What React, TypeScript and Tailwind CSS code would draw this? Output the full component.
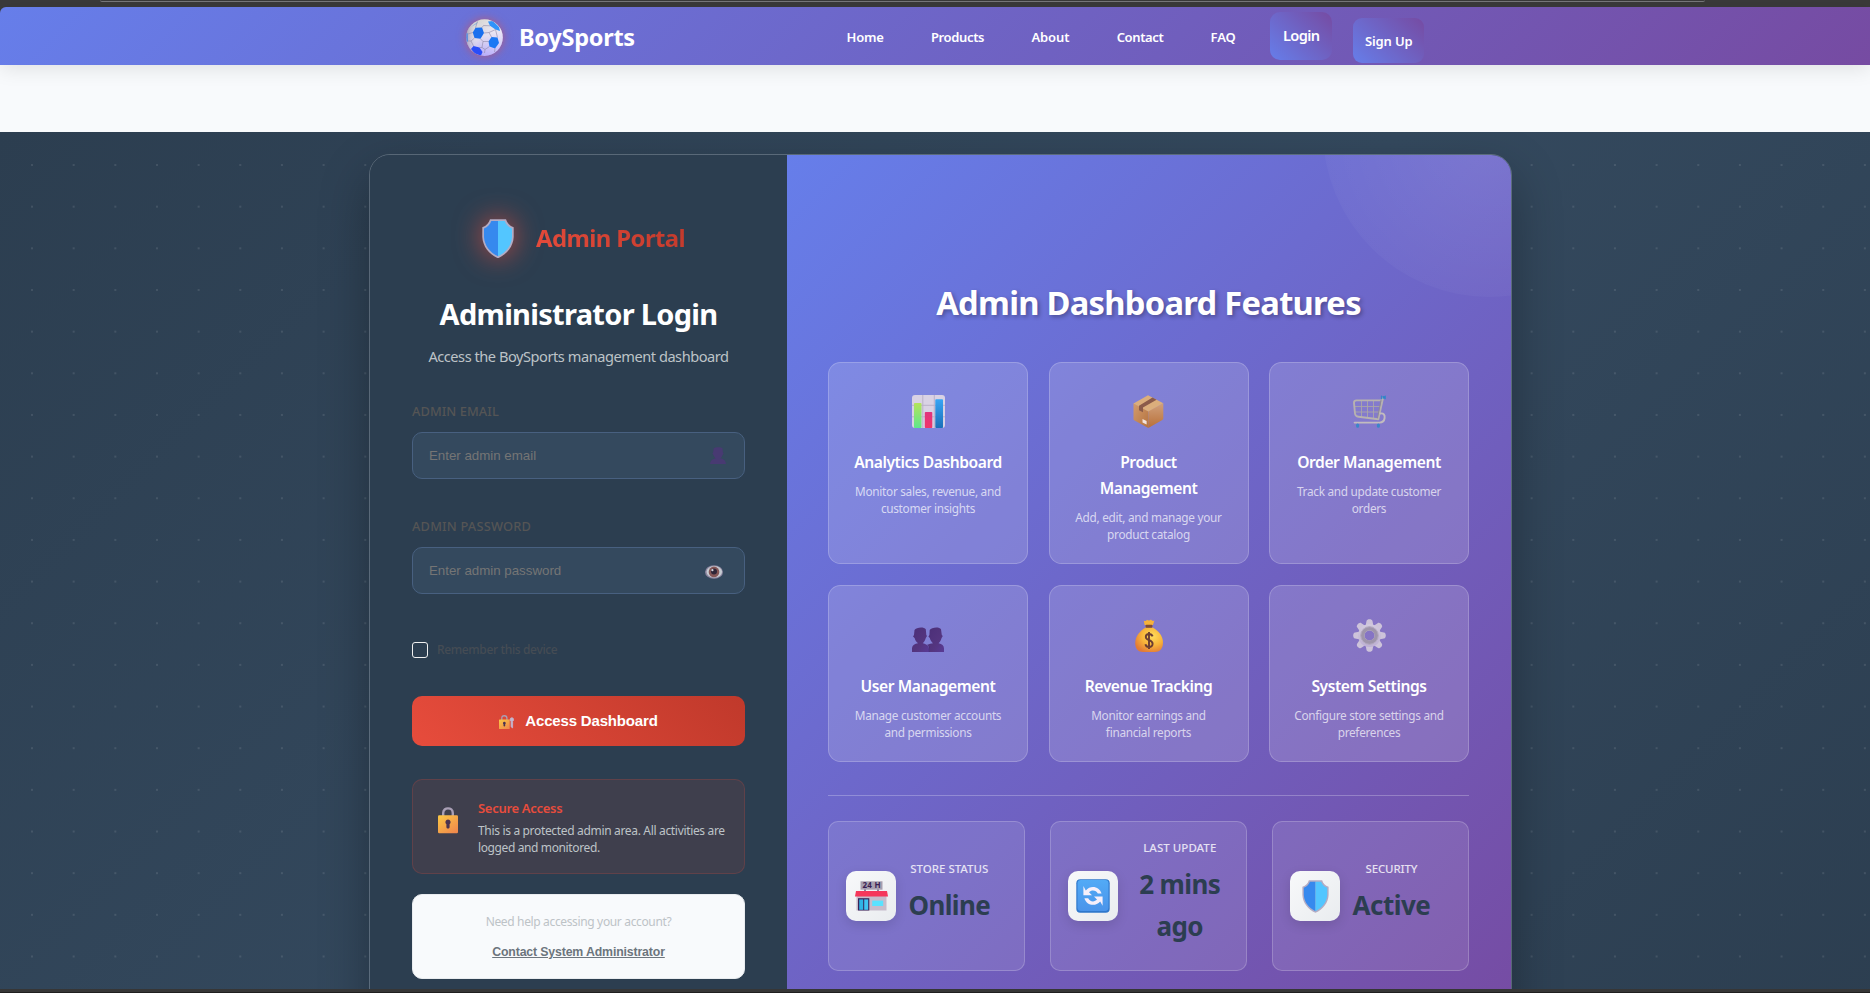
import type { ReactNode } from "react";

function Ball() {
  return (
    <svg viewBox="0 0 37 37" className="size-[37px] shrink-0 drop-shadow-[0_0_5px_rgba(231,76,60,0.6)]">
      <defs>
        <linearGradient id="ballBase" x1="0.2" y1="0" x2="0.6" y2="1">
          <stop offset="0" stopColor="#d6d7ce" />
          <stop offset="0.5" stopColor="#dfdaee" />
          <stop offset="1" stopColor="#ab9ffa" />
        </linearGradient>
        <linearGradient id="ballShade" x1="0" y1="0.5" x2="1" y2="0.5">
          <stop offset="0" stopColor="#6f6a92" stopOpacity="0.5" />
          <stop offset="0.35" stopColor="#ffffff" stopOpacity="0" />
          <stop offset="1" stopColor="#ffffff" stopOpacity="0.45" />
        </linearGradient>
        <clipPath id="ballClip"><circle cx="18.5" cy="18.6" r="18.3" /></clipPath>
      </defs>
      <g clipPath="url(#ballClip)">
        <rect width="37" height="37" fill="url(#ballBase)" />
        <rect width="37" height="37" fill="url(#ballShade)" />
        <path d="M9.5 8.8L16 8.6L18 14L14.5 19.8L8.5 19L6.8 13.5Z" fill="#1a70ee" />
        <path d="M25.5 18L31.5 18.5L33 24L29 29.5L23.5 27.5L22.5 22.5Z" fill="#1a78f4" />
        <path d="M22 2.5L27 2L33 8L34 12L29.5 10.5L24 6.8Z" fill="#2f93fb" />
        <path d="M7.5 27L13.5 28.5L16.5 33L15 36.5L9 35L5 30Z" fill="#2a4df8" />
        <path d="M0 13L1.6 14.5L1.8 22L0.5 24Z" fill="#3a80e8" />
        <path d="M5 8L9.5 4.5L12 2.5L10.5 5Z" fill="#5c9de0" opacity="0.7" />
        <path
          d="M16 8.6L17.5 6.5L24 6.8M9.5 8.8L11.5 2.5M18 14L23 13.5M29.5 10.5L23 13.5L25.5 18M14.5 19.8L17 22.5L22.5 22.5M17 22.5L16 28.5L13.5 28.5M16 28.5L19 30.5L23.5 27.5M8.5 19L5 22L7.5 27M6.8 13.5L2 15M29 29.5L28.5 33M29.5 10.5L31.5 18.5M2 22L5 22M19 30.5L18.5 34"
          fill="none" stroke="#8e8aaa" strokeWidth="0.6"
        />
      </g>
    </svg>
  );
}

function Shield({ className }: { className: string }) {
  return (
    <svg viewBox="0 0 32 39.5" className={className}>
      <path d="M8 0.3H24C25 4 27.6 6.9 31.7 8.2V18C31.2 27.5 25 35.3 16 39.3C7 35.3 0.8 27.5 0.3 18V8.2C4.4 6.9 7 4 8 0.3Z" fill="#b3acc4" />
      <path d="M16 2H9.3C8 5.4 5.6 8 2 9.4V18C2.5 26.6 8 33.5 16 37.3Z" fill="#3689ee" />
      <path d="M16 2H22.7C24 5.4 26.4 8 30 9.4V18C29.5 26.6 24 33.5 16 37.3Z" fill="#53c6ff" />
    </svg>
  );
}

function Chart() {
  return (
    <svg viewBox="0 0 33 33" className="size-[33px]">
      <defs>
        <linearGradient id="barG" x1="0" y1="0" x2="0" y2="1"><stop stopColor="#b4e35a" /><stop offset="1" stopColor="#5ee78d" /></linearGradient>
        <linearGradient id="barR" x1="0" y1="0" x2="0" y2="1"><stop stopColor="#e0347e" /><stop offset="1" stopColor="#f0356a" /></linearGradient>
        <linearGradient id="barB" x1="0" y1="0" x2="0" y2="1"><stop stopColor="#38a5f5" /><stop offset="1" stopColor="#1b6fb8" /></linearGradient>
      </defs>
      <rect width="33" height="33" rx="3" fill="#d9d2e4" />
      <path d="M0 10.3H33M0 21.8H33M10.8 0V33M22.3 0V33" stroke="#b9b1c8" strokeWidth="1" />
      <rect x="2" y="8" width="7.5" height="25" rx="0.8" fill="url(#barG)" />
      <rect x="12.8" y="17" width="7.5" height="16" rx="0.8" fill="url(#barR)" />
      <rect x="23.3" y="4.2" width="7.7" height="28.8" rx="0.8" fill="url(#barB)" />
    </svg>
  );
}

function Package() {
  return (
    <svg viewBox="0 0 33 33" className="size-[33px]">
      <defs>
        <linearGradient id="boxL" x1="0" y1="0" x2="1" y2="1"><stop stopColor="#d39b6c" /><stop offset="1" stopColor="#b5733f" /></linearGradient>
        <linearGradient id="boxR" x1="0" y1="0" x2="0" y2="1"><stop stopColor="#d0a07c" /><stop offset="1" stopColor="#b97038" /></linearGradient>
      </defs>
      <path d="M1.5 8.2L16.3 16V33L2.6 25.6C1.9 25.2 1.5 24.8 1.5 24Z" fill="url(#boxL)" />
      <path d="M31.3 8.2L16.3 16V33L30.3 25C31 24.6 31.3 24.2 31.3 23.5Z" fill="url(#boxR)" />
      <path d="M16 0.2L31.3 8.2L16.3 16.4L1.5 8.4Z" fill="#dbae7c" />
      <path d="M20.5 2.6L24.6 4.8L11 12.6V17.3L7 15.2V10.8Z" fill="#8b5b4a" />
      <path d="M10.5 24L14.6 26V29.6L10.5 27.5Z" fill="#f3e3dc" />
    </svg>
  );
}

function Cart() {
  return (
    <svg viewBox="0 0 33 33" className="size-[33px]" fill="none" strokeLinecap="round" strokeLinejoin="round">
      <path d="M8.5 6V22M14.5 6V22.5M20.5 6V23M1.5 11.5H27.5M2 17H26" stroke="#a9a6a8" strokeWidth="0.9" />
      <path d="M30 3L25.3 24.2L5.5 21.8C3.4 21.5 2.2 20.4 2 18.5L1 8C0.9 6.2 1.8 5.4 3.5 5.4H28.6" stroke="#b7b2b0" strokeWidth="1.9" />
      <path d="M28 5.4L24.5 23" stroke="#8f8b96" strokeWidth="1" />
      <path d="M27.5 18.5C30.6 18 32 20 31.6 23C31.2 26 29.5 27.6 26.5 27.6H1.6" stroke="#c2bcbe" strokeWidth="1.9" />
      <path d="M29.5 2.4H32" stroke="#2f86c8" strokeWidth="2.6" strokeLinecap="butt" />
      <path d="M28.4 1V3.8M32.3 1V3.8" stroke="#2f86c8" strokeWidth="1" />
      <path d="M4.6 30V31.2M25.4 30V31.2" stroke="#3a86c8" strokeWidth="3" />
    </svg>
  );
}

function People() {
  return (
    <svg viewBox="0 0 32 25" className="h-[25px] w-8">
      <defs><linearGradient id="ppl" x1="0" y1="0" x2="1" y2="1"><stop stopColor="#4b2f78" /><stop offset="0.6" stopColor="#54357f" /><stop offset="1" stopColor="#593a96" /></linearGradient></defs>
      <path d="M2.5 3C4 0.2 12 -0.6 13.8 2.2L14.3 8L15 9L13.8 11C13 14 11.5 15.5 10.8 16.2C14 16.7 17 18.5 17 22V25H0V21C0.4 18 2.8 16.8 6 16.3C4.6 15.2 3.2 13.4 2.6 11L1 9.5L2 8Z" fill="url(#ppl)" />
      <path d="M17.7 3C19.2 0.2 27.4 -0.6 29 2.2L29.8 8L30.8 9L29.6 11C28.8 14 27.4 15.4 26.6 16.2C30 16.8 32 18.4 32 21.5V25H17.2C17.4 20.5 17 18.6 15.6 17.8C17 16.8 19.4 16.6 21 16.2C19.6 15.2 18.4 13.4 17.8 11L16.4 9.4L17.4 8Z" fill="url(#ppl)" />
      <path d="M17.3 25C17.4 20.5 17 18.8 15.6 17.8" stroke="#3b2265" strokeWidth="0.6" fill="none" />
    </svg>
  );
}

function MoneyBag() {
  return (
    <svg viewBox="0 0 28 33" className="h-[33px] w-7">
      <defs><radialGradient id="bag" cx="0.62" cy="0.35" r="0.7"><stop stopColor="#ffdd5c" /><stop offset="0.55" stopColor="#f8b43a" /><stop offset="1" stopColor="#e27a36" /></radialGradient></defs>
      <path d="M9.6 6L8.8 1.8C10.4 2.4 11.2 1.8 12 0.8C13.2 1.8 14.6 1.8 16 0.6C16.8 1.8 18 2.4 19.4 1.6L18 6Z" fill="#f6b23c" />
      <path d="M10.5 8.5H17.8C23 11.5 28 16.5 28 23.5C28 30 24.5 33 20 33H8C3.4 33 0.2 30 0.2 24C0.2 17 5.4 11.5 10.5 8.5Z" fill="url(#bag)" />
      <rect x="10.6" y="5.8" width="6.8" height="3" rx="0.8" fill="#7f4a34" />
      <path d="M17.6 17.4C17 15.6 15.6 15 14 15C12 15 10.8 16.2 10.8 18C10.8 22 17.6 20.4 17.6 24.8C17.6 26.8 16 28 14 28C12 28 10.8 27 10.4 25.2M14 13V30" fill="none" stroke="#6b3d33" strokeWidth="1.9" />
    </svg>
  );
}

function Gear() {
  return (
    <svg viewBox="-16.5 -16.5 33 33" className="size-[33px]">
      <defs><linearGradient id="gear" x1="0" y1="0" x2="0" y2="1"><stop stopColor="#d2cade" /><stop offset="1" stopColor="#beb0d4" /></linearGradient></defs>
      <g fill="url(#gear)">
        {[0, 45, 90, 135, 180, 225, 270, 315].map((a) => (
          <path key={a} transform={`rotate(${a})`} d="M-4 -9L-3 -14.5C-2.6 -16.9 2.6 -16.9 3 -14.5L4 -9Z" fill="#cdc3da" />
        ))}
        <path fillRule="evenodd" d="M0 -11.5A11.5 11.5 0 1 1 -0.01 -11.5ZM0 -5A5 5 0 1 0 0.01 -5Z" />
      </g>
      <circle r="7" fill="none" stroke="#9f95ab" strokeWidth="3.8" />
      <circle r="8.8" fill="none" stroke="#b5abc2" strokeWidth="1" />
    </svg>
  );
}

function Store() {
  return (
    <svg viewBox="0 0 33 30" className="h-[30px] w-[33px] overflow-visible">
      <rect x="1.5" y="14" width="30" height="15.5" fill="#c6bccb" />
      <path d="M10 8V12M23 8V12" stroke="#4a3560" strokeWidth="1.2" />
      <rect x="5.5" y="0.3" width="22" height="8.4" fill="#a79fb0" />
      <text x="16.5" y="7.2" textAnchor="middle" fontSize="8" fontWeight="700" fill="#3a1f55" className="font-['Noto_Sans',sans-serif]" textLength="18">24 H</text>
      <path d="M1 10H32L33 15.5H0Z" fill="#f5375b" />
      <rect x="3" y="17.2" width="11.3" height="12.3" fill="#3a2358" />
      <rect x="4.2" y="18.4" width="4" height="10.4" fill="#2fb4e6" />
      <rect x="9.2" y="18.4" width="4" height="10.4" fill="#3fc4f2" />
      <rect x="17.2" y="19.6" width="11" height="5.4" fill="#59e2ff" />
    </svg>
  );
}

function Refresh() {
  return (
    <svg viewBox="0 0 34 34" className="size-[34px]">
      <defs><linearGradient id="rf" x1="0" y1="0" x2="0" y2="1"><stop stopColor="#52aaf6" /><stop offset="1" stopColor="#4a94ea" /></linearGradient></defs>
      <rect x="0.3" y="0.3" width="33.4" height="33.4" rx="4" fill="#2f78cc" />
      <rect x="1.5" y="1" width="31" height="31" rx="3.4" fill="url(#rf)" />
      <path d="M9.8 11.4C14.6 5.6 23.6 7.4 25.6 14.6H21.8C20.4 11.2 15.8 10.2 13 13.2L16 16.2H7.4V7Z" fill="#f6effa" />
      <path d="M24.2 22.4C19.4 28.2 10.4 26.4 8.4 19.2H12.2C13.6 22.6 18.2 23.6 21 20.6L18 17.6H26.6V26.8Z" fill="#f6effa" />
    </svg>
  );
}

function LockBody({ id }: { id: string }) {
  return (
    <>
      <defs><linearGradient id={id} x1="0" y1="0" x2="0.8" y2="1"><stop stopColor="#fbc844" /><stop offset="1" stopColor="#f08a4c" /></linearGradient></defs>
      <path d="M5.2 9.5V6C5.2 -0.2 14.8 -0.2 14.8 6V9.5" fill="none" stroke="#a99fb5" strokeWidth="2.4" />
      <rect x="0" y="8.2" width="20" height="18" rx="1.2" fill={`url(#${id})`} />
      <path d="M10 12.4A2.7 2.7 0 0 1 11.6 17.2V20C11.6 22 8.4 22 8.4 20V17.2A2.7 2.7 0 0 1 10 12.4Z" fill="#4a3350" />
    </>
  );
}

function Bust() {
  return (
    <svg viewBox="0 0 16 17" className="h-[17px] w-4">
      <path d="M3.6 1.6C4.8 -0.1 11.2 -0.3 12.6 1.4L12.8 5.2L13.6 6.4L12.4 8.2C11.8 10 11 10.8 10.3 11.3C13.4 11.8 15.8 13.6 16 17H0C0.2 13.8 2.6 11.8 5.7 11.3C4.8 10.6 4 9.6 3.6 8.2L2.4 6.4L3.2 5.2Z" fill="#483a72" />
    </svg>
  );
}

function Eye() {
  return (
    <svg viewBox="0 0 18 14" className="h-3.5 w-[18px]">
      <ellipse cx="9" cy="7" rx="9" ry="6.8" fill="#8d86a0" />
      <ellipse cx="9.3" cy="6.8" rx="7.8" ry="5.8" fill="#c6cbd2" />
      <circle cx="9" cy="6.9" r="5.3" fill="#855757" />
      <circle cx="9" cy="6.6" r="3" fill="#2f2638" />
      <circle cx="7.4" cy="5.2" r="1.1" fill="#d8d8e0" />
    </svg>
  );
}

const links: { label: string; cls: string }[] = [
  { label: "Home", cls: "tracking-[-0.2px]" },
  { label: "Products", cls: "tracking-[-0.36px]" },
  { label: "About", cls: "tracking-[-0.1px]" },
  { label: "Contact", cls: "tracking-[-0.38px]" },
  { label: "FAQ", cls: "tracking-[-0.1px]" },
];

type Feature = { icon: ReactNode; title: string[]; desc: string[]; pad: string };
const features: Feature[] = [
  { icon: <Chart />, title: ["Analytics Dashboard"], desc: ["Monitor sales, revenue, and", "customer insights"], pad: "pt-8" },
  { icon: <Package />, title: ["Product", "Management"], desc: ["Add, edit, and manage your", "product catalog"], pad: "pt-8" },
  { icon: <Cart />, title: ["Order Management"], desc: ["Track and update customer", "orders"], pad: "pt-8" },
  { icon: <People />, title: ["User Management"], desc: ["Manage customer accounts", "and permissions"], pad: "pt-[33px]" },
  { icon: <MoneyBag />, title: ["Revenue Tracking"], desc: ["Monitor earnings and", "financial reports"], pad: "pt-[33px]" },
  { icon: <Gear />, title: ["System Settings"], desc: ["Configure store settings and", "preferences"], pad: "pt-[33px]" },
];

const stats: { icon: ReactNode; label: string; value: string[]; grow?: boolean; labelCls: string; valueCls: string }[] = [
  { icon: <Store />, label: "Store Status", value: ["Online"], labelCls: "tracking-[-0.02px]", valueCls: "tracking-[-0.65px]" },
  { icon: <Refresh />, label: "Last Update", value: ["2 mins", "ago"], grow: true, labelCls: "tracking-[0.04px]", valueCls: "tracking-[-0.6px]" },
  { icon: <Shield className="h-[33px] w-[27px]" />, label: "Security", value: ["Active"], labelCls: "tracking-[-0.15px]", valueCls: "tracking-[-0.5px]" },
];

function Header() {
  return (
    <>
      <div className="h-[7px] bg-[#3a3a3a]">
        <div className="mr-[165px] ml-[100px] h-0.5 rounded-b-[3px] border-b border-[#77777a]" />
      </div>
      <header className="bg-[linear-gradient(90deg,#3a3a3a_10px,#f8fafc_10px)]">
        <nav className="relative z-10 flex h-[58px] items-start rounded-tl-[6px] bg-[linear-gradient(135deg,#667eea_0%,#764ba2_100%)] pl-[466px] text-white shadow-[0_4px_20px_rgba(0,0,0,0.1)]">
          <div className="flex h-[61px] w-[380.5px] items-center gap-4">
            <Ball />
            <span className="-mt-px text-[23.5px] leading-8 font-bold tracking-[-0.26px]">BoySports</span>
          </div>
          <ul className="flex h-[62px] items-center gap-[47.3px] text-[13px] font-semibold">
            {links.map((l) => (
              <li key={l.label} className={l.cls}>{l.label}</li>
            ))}
          </ul>
          <button className="mt-[5px] ml-[34.5px] h-12 w-[62px] rounded-[10px] bg-[linear-gradient(45deg,#667eea,#764ba2)] pb-px text-[14.6px] font-semibold tracking-[-0.6px]">Login</button>
          <button className="mt-[11px] ml-[21px] h-[45px] w-[71px] rounded-[9px] bg-[linear-gradient(45deg,#667eea,#764ba2)] pt-0.5 text-[13px] font-semibold tracking-[-0.15px]">Sign Up</button>
        </nav>
      </header>
      <div className="h-[67px] bg-[#f8fafc]" />
    </>
  );
}

function LoginPanel() {
  const input =
    "h-[47px] w-full rounded-[10px] border border-[#486080] bg-[#34495e] px-4 font-['Liberation_Sans',Arial,sans-serif] text-[13.33px] tracking-[-0.02px] text-white outline-none placeholder:text-[#757575]";
  return (
    <div className="w-[417px] shrink-0 bg-[#2c3e50] px-[42px] pt-[59px]">
      <div className="flex h-[49px] items-center gap-[22px] pl-[70px]">
        <span className="rounded-full drop-shadow-[0_0_14px_rgba(231,76,60,0.8)]">
          <Shield className="h-[39.5px] w-8" />
        </span>
        <span className="-mt-px bg-[linear-gradient(45deg,#e74c3c,#c0392b)] bg-clip-text text-[24px] leading-8 font-bold tracking-[-0.65px] text-transparent">Admin Portal</span>
      </div>
      <h1 className="mt-[31px] text-center text-[29px] leading-10 font-bold tracking-[-0.7px] text-white">Administrator Login</h1>
      <p className="mt-2.5 text-center text-[14.6px] leading-6 tracking-[-0.46px] whitespace-nowrap text-[#bdc3c7]">Access the BoySports management dashboard</p>

      <label className="mt-[33px] block text-[12.8px] leading-5 font-medium tracking-[0.09px] text-[#555] uppercase">Admin Email</label>
      <div className="relative mt-[11px]">
        <input className={input} placeholder="Enter admin email" />
        <span className="absolute top-[15px] right-[19px]"><Bust /></span>
      </div>
      <label className="mt-[37px] block text-[12.8px] leading-5 font-medium tracking-[0.2px] text-[#555] uppercase">Admin Password</label>
      <div className="relative mt-[11px]">
        <input className={input} placeholder="Enter admin password" />
        <span className="absolute top-[18px] right-[22px]"><Eye /></span>
      </div>

      <label className="mt-12 flex h-4 items-center gap-[9px]">
        <span className="size-4 rounded-[3px] border border-[#f0f0f0]" />
        <span className="text-[12px] leading-4 font-medium tracking-[-0.35px] text-[#454c54]">Remember this device</span>
      </label>

      <button className="mt-[38px] flex h-[50px] w-full items-center justify-center gap-[11px] rounded-[10px] bg-[linear-gradient(45deg,#e74c3c,#c0392b)] font-['Liberation_Sans',Arial,sans-serif] text-[15px] font-bold text-white">
        <svg viewBox="0 0 28 26" className="mt-0.5 h-3.5 w-[15px]">
          <LockBody id="lockSm" />
          <path d="M24 5A3.6 3.6 0 0 1 25.4 11.8V24L22.6 22V11.8A3.6 3.6 0 0 1 24 5Z" fill="#c3b6d0" stroke="#c3b6d0" strokeWidth="1.5" />
        </svg>
        <span className="tracking-[-0.17px]">Access Dashboard</span>
      </button>

      <div className="mt-[33px] flex h-[95px] rounded-[10px] border border-[rgba(231,76,60,0.2)] bg-[rgba(231,76,60,0.1)] pt-[19px] pl-[25px]">
        <svg viewBox="0 0 20 26.5" className="mt-2 h-[26.5px] w-5 shrink-0"><LockBody id="lockLg" /></svg>
        <div className="ml-5 whitespace-nowrap">
          <h4 className="text-[13px] leading-[18px] font-semibold tracking-[-0.3px] text-[#e74c3c]">Secure Access</h4>
          <p className="mt-[5px] text-[12px] leading-[17px] tracking-[-0.33px] text-[#bdc3c7]">
            This is a protected admin area. All activities are
            <br />
            <span className="tracking-[-0.38px]">logged and monitored.</span>
          </p>
        </div>
      </div>

      <div className="mt-5 h-[85px] rounded-[10px] border border-[#e9ecef] bg-[#f8fafc] pt-[18px] text-center">
        <p className="text-[12px] leading-[18px] tracking-[-0.35px] text-[#bdc3c7]">Need help accessing your account?</p>
        <a className="mt-3 block font-['Liberation_Sans',Arial,sans-serif] text-[12.3px] leading-[18px] font-bold tracking-[-0.14px] text-[#6c757d] underline">Contact System Administrator</a>
      </div>
    </div>
  );
}

function FeaturePanel() {
  return (
    <div className="relative grow overflow-hidden bg-[linear-gradient(135deg,#667eea_0%,#764ba2_100%)] pt-[126px] pr-[42px] pl-[41px]">
      <div className="absolute -top-[191px] -right-[145px] size-[333px] rounded-full bg-[radial-gradient(circle,rgba(255,255,255,0.1)_0%,transparent_100%)]" />
      <h2 className="text-center text-[32.7px] leading-11 font-bold tracking-[-0.72px] text-white [text-shadow:2px_2px_4px_rgba(0,0,0,0.3)]">Admin Dashboard Features</h2>
      <div className="mt-[37px] grid grid-cols-3 grid-rows-[202px_177px] gap-x-[20.5px] gap-y-[21px]">
        {features.map((f) => (
          <div key={f.title[0]} className={`flex flex-col items-center rounded-[12.5px] border border-white/20 bg-white/15 text-center whitespace-nowrap ${f.pad}`}>
            <div className="flex h-[33px] items-end">{f.icon}</div>
            <h3 className="mt-[21px] text-[15.6px] leading-[26px] font-semibold tracking-[-0.42px] text-white">
              {f.title.map((t) => <span key={t} className="block">{t}</span>)}
            </h3>
            <p className="mt-2 text-[11.8px] leading-[16.7px] tracking-[-0.29px] text-white/70">
              {f.desc.map((t) => <span key={t} className="block">{t}</span>)}
            </p>
          </div>
        ))}
      </div>
      <div className="mt-[33px] grid grid-cols-3 gap-[25px] border-t border-white/25 pt-[25px]">
        {stats.map((s) => (
          <div key={s.label} className="flex h-[150px] items-center gap-[12.5px] rounded-[10px] border border-white/20 bg-white/10 px-[17px]">
            <div className="flex size-[50px] shrink-0 items-center justify-center rounded-[10px] bg-[linear-gradient(135deg,#f8f9fa,#e9ecef)] shadow-[0_4px_12px_rgba(0,0,0,0.12)]">{s.icon}</div>
            <div className={s.grow ? "grow pb-[5px] text-center" : "pb-[5px] text-center"}>
              <div className={`mb-[5.5px] text-[11.5px] leading-[18px] font-medium whitespace-nowrap text-white/80 uppercase ${s.labelCls}`}>{s.label}</div>
              <div className={`text-[26px] leading-[42.6px] font-bold text-[#2c3e50] ${s.valueCls}`}>
                {s.value.map((v) => <span key={v} className="block whitespace-nowrap">{v}</span>)}
              </div>
            </div>
          </div>
        ))}
      </div>
    </div>
  );
}

export default function App() {
  return (
    <div className="flex h-[993px] w-[1870px] flex-col overflow-hidden bg-[#f8fafc] font-['Noto_Sans',sans-serif]">
      <Header />
      <main className="h-[857px] overflow-hidden">
        <div className="h-[930px] bg-[linear-gradient(135deg,#2c3e50_0%,#34495e_50%,#2c3e50_100%)]">
          <div className="h-full bg-[radial-gradient(circle,rgba(255,255,255,0.1)_1px,transparent_1.4px)] bg-[length:41.667px_41.667px] bg-[position:11.2px_12.2px] pt-[22px] pl-[369px]">
            <div className="flex h-[880px] w-[1143px] overflow-hidden rounded-[21px] border border-white/20 shadow-[0_20px_50px_rgba(0,0,0,0.3)]">
              <LoginPanel />
              <FeaturePanel />
            </div>
          </div>
        </div>
      </main>
      <div className="h-1 border-b border-[#1f1f1f] bg-[#363636]" />
    </div>
  );
}
